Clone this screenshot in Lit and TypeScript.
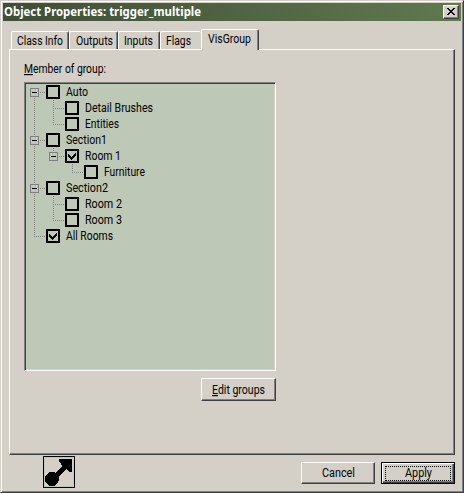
import { LitElement, html, css, svg } from "lit";
import { customElement, state } from "lit/decorators.js";
import { classMap } from "lit/directives/class-map.js";

interface Row {
  label: string;
  depth: number;
  width: number;
  checked?: boolean;
  open?: boolean;
  guides: string[];
}

// guides: one entry per indent column. "v" = through line, "t" = branch,
// "l" = last branch, "s" = first root, "" = blank
const ROWS: Row[] = [
  { label: "Auto", depth: 0, width: 22, open: true, guides: ["s"] },
  { label: "Detail Brushes", depth: 1, width: 68, guides: ["v", "t"] },
  { label: "Entities", depth: 1, width: 34, guides: ["v", "l"] },
  { label: "Section1", depth: 0, width: 41, open: true, guides: ["t"] },
  { label: "Room 1", depth: 1, width: 36, checked: true, open: true, guides: ["v", "l"] },
  { label: "Furniture", depth: 2, width: 41, guides: ["v", "", "l"] },
  { label: "Section2", depth: 0, width: 42, open: true, guides: ["t"] },
  { label: "Room 2", depth: 1, width: 37, guides: ["v", "t"] },
  { label: "Room 3", depth: 1, width: 37, guides: ["v", "l"] },
  { label: "All Rooms", depth: 0, width: 47, checked: true, guides: ["l"] },
];

const TABS = [
  { label: "Class Info", cls: "t1", width: 46 },
  { label: "Outputs", cls: "t2", width: 37 },
  { label: "Inputs", cls: "t3", width: 29 },
  { label: "Flags", cls: "t4", width: 25 },
  { label: "VisGroup", cls: "t5", width: 43 },
];

const label = (text: string, width: number, bold = false, mnemonic = false) => html`
  <svg class="label" width=${width} height="16">
    <text class=${bold ? "bold" : ""} x="0" y="12" textLength=${width} lengthAdjust="spacingAndGlyphs">${
      mnemonic ? svg`<tspan class="key">${text[0]}</tspan>${text.slice(1)}` : text
    }</text>
  </svg>`;

@customElement("app-root")
export class AppRoot extends LitElement {
  @state() private rows = ROWS;

  static styles = css`
    :host { display: block; font: 12px Roboto, "Liberation Sans", sans-serif; color: #000; }
    * { box-sizing: border-box; }
    svg { display: block; flex: none; }
    .label { overflow: visible; }
    .label text { font: 12px Roboto, "Liberation Sans", sans-serif; }
    .label text.bold { font: bold 12px "Noto Sans", sans-serif; fill: #fff; }
    .key { text-decoration: underline; }
    .window {
      width: 464px; height: 493px; background: #d4d0c8; padding: 1px;
      border: 1px solid; border-color: #d4d0c8 #404040 #404040 #d4d0c8;
      box-shadow: inset 1px 1px #fff, inset -1px -1px #808080;
      display: flex; flex-direction: column;
    }
    .title {
      height: 18px; margin: 1px; padding: 0 2px 0 1px;
      background: linear-gradient(90deg, #3e4e37, #60794f);
      display: flex; align-items: center; justify-content: space-between; flex: none;
    }
    .close {
      width: 16px; height: 14px; padding: 0; border: 1px solid;
      border-color: #fff #404040 #404040 #fff; background: #d4d0c8;
      box-shadow: inset -1px -1px #808080; display: flex; justify-content: center; padding-top: 2px;
    }
    .tabs { display: flex; align-items: flex-end; height: 21px; margin: 6px 0 0 9px; flex: none; }
    .tab {
      height: 18px; border: 1px solid; border-color: #fff #404040 transparent #fff; border-bottom: 0;
      border-radius: 2px 2px 0 0; box-shadow: inset -1px 0 #808080; padding: 1px 0 0 5px;
    }
    .t1 { width: 58px; } .t2 { width: 49px; padding-left: 6px; } .t3 { width: 42px; }
    .t4 { width: 41px; border-right: 0; box-shadow: none; }
    .tab.active { width: 58px; height: 21px; margin-bottom: -1px; background: #d4d0c8; position: relative; padding: 1px 0 0 6px; }
    .panel {
      width: 446px; height: 406px; margin-left: 7px; flex: none;
      border: 1px solid; border-color: #fff #404040 #404040 #fff;
      box-shadow: inset -1px -1px #808080; padding: 11px 0 0 14px;
      display: flex; flex-direction: column; align-items: flex-start;
    }
    .tree {
      width: 252px; height: 289px; margin-top: 5px; background: #bdc8b6;
      border: 1px solid; border-color: #808080 #fff #fff #808080;
      box-shadow: inset 1px 1px #404040, inset -1px -1px #d4d0c8; padding: 1px 0 0 2px;
    }
    .row { display: flex; height: 16px; align-items: center; }
    .row .label { margin-left: 6px; }
    .button {
      height: 22px; width: 74px; padding: 0; background: #d4d0c8; border: 1px solid;
      border-color: #fff #404040 #404040 #fff; box-shadow: inset -1px -1px #808080;
      display: flex; align-items: center; justify-content: center;
    }
    .edit { width: 75px; height: 23px; margin: 7px 0 0 177px; }
    .default {
      border-color: #000; box-shadow: inset 1px 1px #fff, inset -1px -1px #404040, inset -2px -2px #808080;
    }
    .focus { width: 66px; height: 15px; border: 1px dotted #000; display: flex; align-items: center; justify-content: center; }
    .footer { display: flex; padding: 1px 7px 0 41px; }
    .footer .button { margin-top: 6px; }
    .footer .cancel { margin-left: 226px; }
    .footer .default { margin-left: 6px; }
  `;

  private toggle(i: number) {
    this.rows = this.rows.map((r, n) => (n === i ? { ...r, checked: !r.checked } : r));
  }

  private guide(kind: string, open: boolean) {
    const branch = kind === "s" || kind === "t" || kind === "l";
    const end = kind === "l" ? 8 : 16;
    return html`<svg width="19" height="16" shape-rendering="crispEdges">
      ${kind && kind !== "s" ? svg`<path d="M7.5 0V${end}" stroke="#808080" stroke-dasharray="1 1"/>` : ""}
      ${kind === "s" ? svg`<path d="M7.5 14V16" stroke="#808080" stroke-dasharray="1 1"/>` : ""}
      ${branch ? svg`<path d="M7 8.5H19" stroke="#808080" stroke-dasharray="1 1"/>` : ""}
      ${open ? svg`<rect x="3.5" y="4.5" width="8" height="8" fill="#bdc8b6" stroke="#808080"/><path d="M5 8.5h5" stroke="#000"/>` : ""}
    </svg>`;
  }

  private row(r: Row, i: number) {
    return html`<div class="row" @click=${() => this.toggle(i)}>
      ${r.guides.map((g, n) => this.guide(g, !!r.open && n === r.depth))}
      <svg width="14" height="14" shape-rendering="crispEdges">
        <rect x="1" y="1" width="12" height="12" fill="none" stroke="#000" stroke-width="2"/>
        ${r.checked ? svg`<path d="M3 5h1v1h1v1h1v1h1v-1h1v-1h1v-1h1v-1h1v3h-1v1h-1v1h-1v1h-1v1h-1v-1h-1v-1h-1v-1h-1z"/>` : ""}
      </svg>
      ${label(r.label, r.width)}
    </div>`;
  }

  render() {
    return html`<div class="window">
      <div class="title">
        ${label("Object Properties: trigger_multiple", 197, true)}
        <button class="close" aria-label="Close"><svg width="8" height="7" shape-rendering="crispEdges"><path d="M0 0h2v1h1v1h2v-1h1v-1h2v1h-1v1h-1v1h-1v1h1v1h1v1h1v1h-2v-1h-1v-1h-2v1h-1v1h-2v-1h1v-1h1v-1h1v-1h-1v-1h-1v-1h-1z"/></svg></button>
      </div>
      <div class="tabs">
        ${TABS.map((t) => html`<div class=${classMap({ tab: true, [t.cls]: true, active: t.cls === "t5" })}>${label(t.label, t.width)}</div>`)}
      </div>
      <div class="panel">
        ${label("Member of group:", 82, false, true)}
        <div class="tree">${this.rows.map((r, i) => this.row(r, i))}</div>
        <button class="button edit">${label("Edit groups", 53, false, true)}</button>
      </div>
      <div class="footer">
        <svg width="32" height="32" shape-rendering="crispEdges">
          <rect x=".5" y=".5" width="31" height="31" fill="#d4d0c8" stroke="#000"/>
          <rect x="1.5" y="1.5" width="29" height="29" fill="none" stroke="#bdc8b6"/>
          <circle cx="9" cy="23" r="7"/><path d="M10 19L19 10L18 7L16 6V3H29V16H27L23 13L13 23Z"/>
        </svg>
        <button class="button cancel">${label("Cancel", 33)}</button>
        <button class="button default"><span class="focus">${label("Apply", 27)}</span></button>
      </div>
    </div>`;
  }
}
